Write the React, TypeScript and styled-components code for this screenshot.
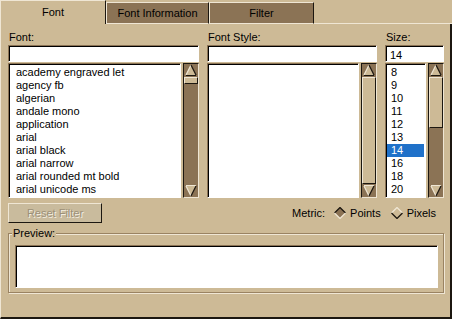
import React from 'react';
import styled, { createGlobalStyle } from 'styled-components';

const LIGHT = '#efe6d4';
const DARK = '#1c1710';
const TAN = '#cdba96';
const BROWN = '#8b7355';

const fonts = [
  'academy engraved let',
  'agency fb',
  'algerian',
  'andale mono',
  'application',
  'arial',
  'arial black',
  'arial narrow',
  'arial rounded mt bold',
  'arial unicode ms',
];

const sizes = ['8', '9', '10', '11', '12', '13', '14', '16', '18', '20'];

const GlobalStyle = createGlobalStyle`
  html, body {
    margin: 0;
    padding: 0;
    background: ${TAN};
  }
  body {
    font-family: 'Liberation Sans', Arial, sans-serif;
    font-size: 11px;
    color: #000;
  }
  * {
    box-sizing: border-box;
  }
`;

const ArrowUp = () => (
  <svg width="14" height="12" viewBox="0 0 14 12">
    <polygon points="7,1 12,11 2,11" fill={TAN} />
    <line x1="2" y1="11" x2="7" y2="1" stroke={LIGHT} strokeWidth="1.2" />
    <line x1="7" y1="1" x2="12" y2="11" stroke={DARK} strokeWidth="1.2" />
    <line x1="2" y1="11.5" x2="12" y2="11.5" stroke={DARK} strokeWidth="1" />
  </svg>
);

const ArrowDown = () => (
  <svg width="14" height="12" viewBox="0 0 14 12">
    <polygon points="2,1 12,1 7,11" fill={TAN} />
    <line x1="2" y1="0.5" x2="12" y2="0.5" stroke={LIGHT} strokeWidth="1" />
    <line x1="2" y1="1" x2="7" y2="11" stroke={LIGHT} strokeWidth="1.2" />
    <line x1="12" y1="1" x2="7" y2="11" stroke={DARK} strokeWidth="1.2" />
  </svg>
);

const Diamond = ({ on }: { on?: boolean }) => (
  <svg width="12" height="12" viewBox="0 0 12 12">
    <polygon points="6,0.5 11.5,6 6,11.5 0.5,6" fill={on ? BROWN : TAN} />
    <polyline points="0.5,6 6,0.5 11.5,6" fill="none" stroke={on ? DARK : LIGHT} strokeWidth="1.3" />
    <polyline points="0.5,6 6,11.5 11.5,6" fill="none" stroke={on ? LIGHT : DARK} strokeWidth="1.3" />
  </svg>
);

const ScrollBar = ({ thumb }: { thumb: number }) => (
  <Trough>
    <ArrowUp />
    <Thumb $height={thumb} />
    <Track />
    <ArrowDown />
  </Trough>
);

const FontColumn = ({
  label,
  value,
  items,
  selected,
  thumb,
  indent,
}: {
  label: string;
  value: string;
  items: string[];
  selected?: string;
  thumb: number;
  indent: number;
}) => (
  <Column>
    <Label>{label}</Label>
    <Field>{value}</Field>
    <ListRow>
      <ListBox>
        {items.map((item) => (
          <Row key={item} $selected={item === selected} $indent={indent}>
            {item}
          </Row>
        ))}
      </ListBox>
      <ScrollBar thumb={thumb} />
    </ListRow>
  </Column>
);

const App = () => (
  <>
    <GlobalStyle />
    <Window>
      <TabBar>
        <Tab $active $width={106}>Font</Tab>
        <Tab $width={103}>Font Information</Tab>
        <Tab $width={105}>Filter</Tab>
        <TabFiller />
      </TabBar>
      <Panel>
        <Columns>
          <FontColumn label="Font:" value="" items={fonts} thumb={7} indent={6} />
          <FontColumn label="Font Style:" value="" items={[]} thumb={107} indent={6} />
          <FontColumn label="Size:" value="14" items={sizes} selected="14" thumb={51} indent={4} />
        </Columns>
        <ActionRow>
          <Button disabled>Reset Filter</Button>
          <Metric>
            <span>Metric:</span>
            <Radio $gap={9}>
              <Diamond on />
              <span>Points</span>
            </Radio>
            <Radio $gap={10}>
              <Diamond />
              <span>Pixels</span>
            </Radio>
          </Metric>
        </ActionRow>
        <GroupBox>
          <Legend>Preview:</Legend>
          <PreviewBox />
        </GroupBox>
      </Panel>
    </Window>
  </>
);

export default App;

const Window = styled.div`
  width: 452px;
  height: 319px;
  display: flex;
  flex-direction: column;
  background: ${TAN};
`;

const TabBar = styled.div`
  display: flex;
  align-items: flex-start;
  height: 24px;
`;

const Tab = styled.div<{ $active?: boolean; $width: number }>`
  width: ${(p) => p.$width}px;
  flex-shrink: 0;
  text-align: center;
  border-top: 1px solid ${LIGHT};
  border-left: 1px solid ${LIGHT};
  border-right: 1px solid ${DARK};
  height: ${(p) => (p.$active ? 24 : 22)}px;
  margin-top: ${(p) => (p.$active ? 0 : 2)}px;
  line-height: ${(p) => (p.$active ? 22 : 20)}px;
  background: ${(p) => (p.$active ? TAN : BROWN)};
  border-bottom: ${(p) => (p.$active ? 'none' : `1px solid ${LIGHT}`)};
`;

const TabFiller = styled.div`
  flex: 1;
  height: 24px;
  border-bottom: 1px solid ${LIGHT};
`;

const Panel = styled.div`
  flex: 1;
  display: flex;
  flex-direction: column;
  border-left: 1px solid ${LIGHT};
  border-right: 2px solid ${DARK};
  border-bottom: 2px solid ${DARK};
  padding: 7px 6px 0 7px;
`;

const Columns = styled.div`
  display: grid;
  grid-template-columns: 191px 170px 59px;
  column-gap: 8px;
`;

const Column = styled.div`
  display: flex;
  flex-direction: column;
`;

const Label = styled.div`
  height: 13px;
  line-height: 13px;
  margin-bottom: 1px;
  padding-left: 1px;
`;

const sunken = `
  border: 1px solid;
  border-color: ${BROWN} #fff #fff ${BROWN};
  box-shadow: inset 1px 1px 0 #000;
  background: #fff;
`;

const Field = styled.div`
  ${sunken}
  height: 17px;
  line-height: 16px;
  padding-left: 4px;
  padding-top: 1px;
`;

const ListRow = styled.div`
  display: flex;
  gap: 2px;
  height: 135px;
  margin-top: 1px;
`;

const ListBox = styled.div`
  ${sunken}
  flex: 1;
  padding: 2px 1px 0 1px;
  overflow: hidden;
`;

const Row = styled.div<{ $selected?: boolean; $indent: number }>`
  height: 13px;
  line-height: 13px;
  padding-left: ${(p) => p.$indent}px;
  white-space: nowrap;
  background: ${(p) => (p.$selected ? '#1f71c9' : 'transparent')};
  color: ${(p) => (p.$selected ? '#fff' : '#000')};
`;

const Trough = styled.div`
  width: 16px;
  flex-shrink: 0;
  display: flex;
  flex-direction: column;
  background: ${BROWN};
  border: 1px solid;
  border-color: ${DARK} ${LIGHT} ${LIGHT} ${DARK};
`;

const Thumb = styled.div<{ $height: number }>`
  height: ${(p) => p.$height}px;
  margin-top: 1px;
  background: ${TAN};
  border: 1px solid;
  border-color: ${LIGHT} ${DARK} ${DARK} ${LIGHT};
`;

const Track = styled.div`
  flex: 1;
`;

const ActionRow = styled.div`
  display: flex;
  align-items: center;
  justify-content: space-between;
  margin-top: 5px;
  height: 20px;
`;

const Button = styled.button`
  width: 94px;
  height: 20px;
  padding: 0;
  font: inherit;
  background: #c9bb9d;
  border: 1px solid;
  border-color: ${LIGHT} ${DARK} ${DARK} ${LIGHT};
  color: #9c9078;
  text-shadow: 1px 1px 0 #f4eee2;
`;

const Metric = styled.div`
  display: flex;
  align-items: center;
  margin-right: 8px;
`;

const Radio = styled.div<{ $gap: number }>`
  display: flex;
  align-items: center;
  gap: 4px;
  margin-left: ${(p) => p.$gap}px;
`;

const GroupBox = styled.div`
  position: relative;
  margin-top: 10px;
  height: 60px;
  border: 1px solid #9a8362;
  box-shadow: inset 1px 1px 0 ${LIGHT}, 1px 1px 0 ${LIGHT};
  padding: 11px 5px 4px 6px;
`;

const Legend = styled.div`
  position: absolute;
  top: -7px;
  left: 3px;
  padding: 0 1px;
  line-height: 13px;
  background: ${TAN};
`;

const PreviewBox = styled.div`
  ${sunken}
  height: 43px;
`;
